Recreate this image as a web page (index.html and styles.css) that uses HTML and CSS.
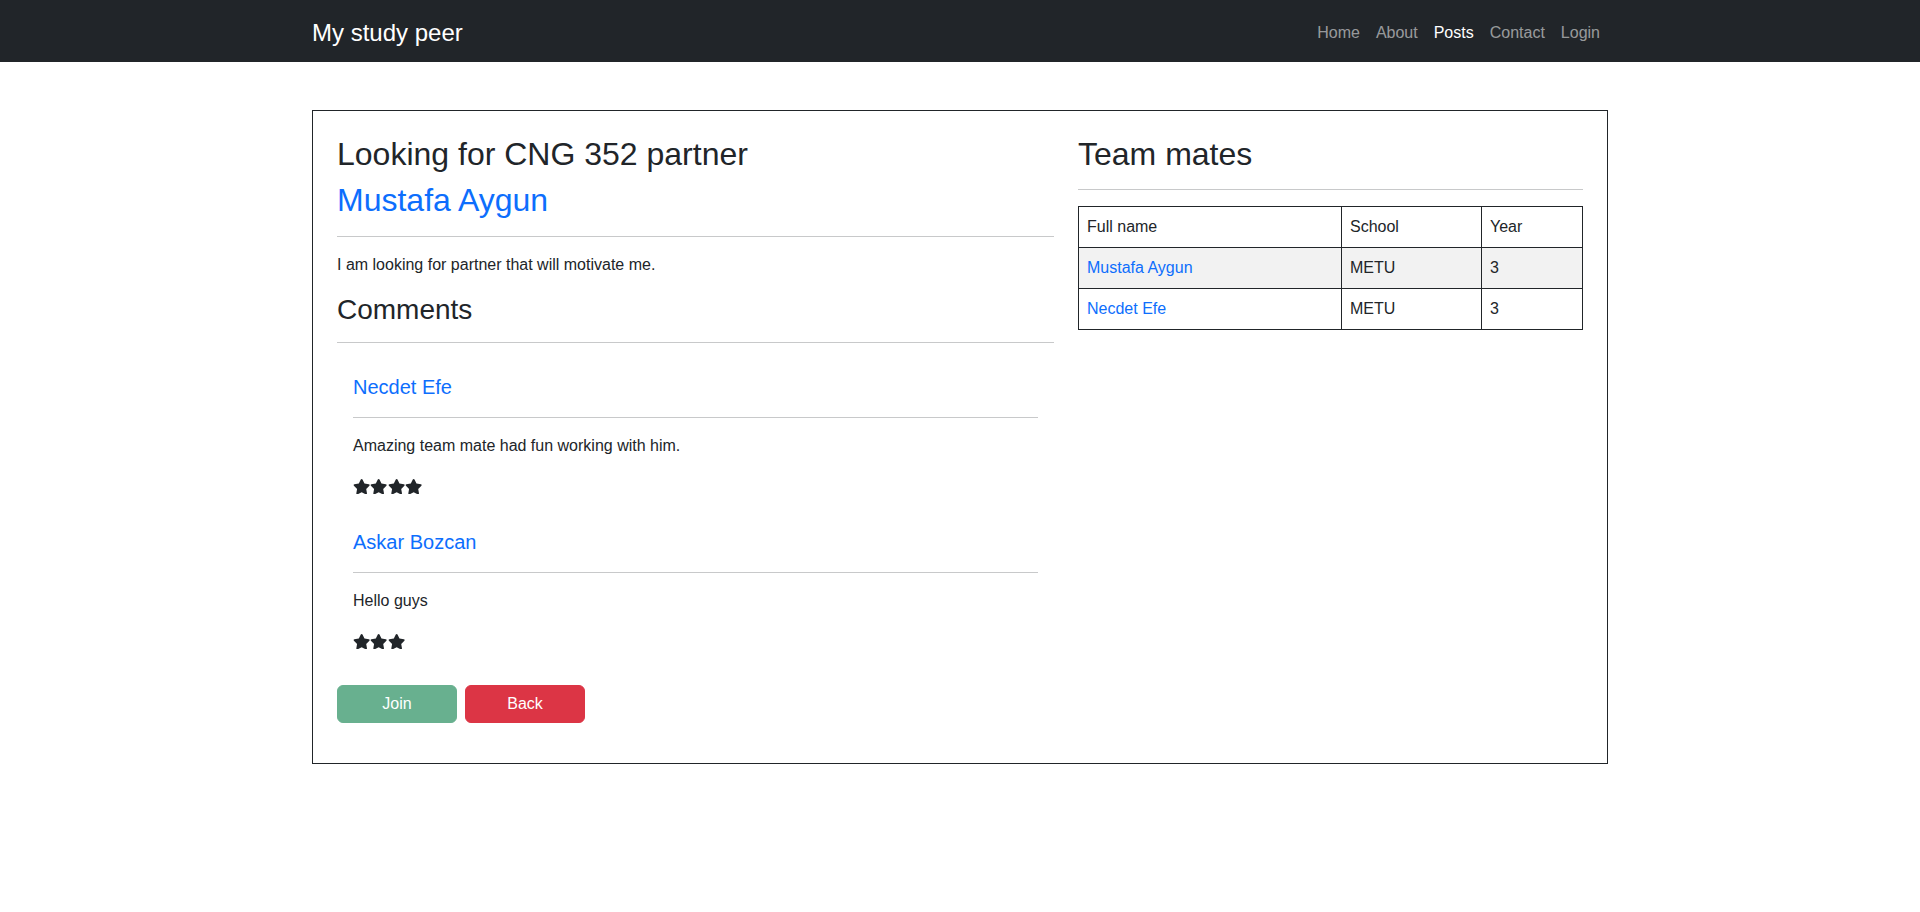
FILE: index.html
```html
<!DOCTYPE html>
<html lang="en">
<head>
<meta charset="utf-8">
<title>My study peer</title>
<link rel="stylesheet" href="styles.css">
</head>
<body>
<nav class="navbar">
  <div class="nav-inner">
    <a class="brand" href="#">My study peer</a>
    <ul class="nav-links">
      <li><a href="#">Home</a></li>
      <li><a href="#">About</a></li>
      <li><a class="active" href="#">Posts</a></li>
      <li><a href="#">Contact</a></li>
      <li><a href="#">Login</a></li>
    </ul>
  </div>
</nav>

<main class="container">
  <section class="card">
    <div class="col-main">
      <h2 class="title">Looking for CNG 352 partner</h2>
      <h2 class="author"><a href="#">Mustafa Aygun</a></h2>
      <hr class="rule">
      <p class="text">I am looking for partner that will motivate me.</p>
      <h3 class="section-title">Comments</h3>
      <hr class="rule">

      <div class="comment">
        <h5 class="comment-name"><a href="#">Necdet Efe</a></h5>
        <hr class="rule">
        <p class="text">Amazing team mate had fun working with him.</p>
        <div class="stars">
          <svg class="star" viewBox="0 0 576 512"><path d="M259.3 17.8L194 150.2 47.9 171.5c-26.2 3.8-36.7 36.1-17.7 54.6l105.7 103-25 145.5c-4.5 26.3 23.2 46 46.4 33.7L288 439.6l130.7 68.7c23.2 12.2 50.9-7.4 46.4-33.7l-25-145.5 105.7-103c19-18.5 8.5-50.8-17.7-54.6L382 150.2 316.7 17.8c-11.7-23.6-45.6-23.9-57.4 0z"/></svg>
          <svg class="star" viewBox="0 0 576 512"><path d="M259.3 17.8L194 150.2 47.9 171.5c-26.2 3.8-36.7 36.1-17.7 54.6l105.7 103-25 145.5c-4.5 26.3 23.2 46 46.4 33.7L288 439.6l130.7 68.7c23.2 12.2 50.9-7.4 46.4-33.7l-25-145.5 105.7-103c19-18.5 8.5-50.8-17.7-54.6L382 150.2 316.7 17.8c-11.7-23.6-45.6-23.9-57.4 0z"/></svg>
          <svg class="star" viewBox="0 0 576 512"><path d="M259.3 17.8L194 150.2 47.9 171.5c-26.2 3.8-36.7 36.1-17.7 54.6l105.7 103-25 145.5c-4.5 26.3 23.2 46 46.4 33.7L288 439.6l130.7 68.7c23.2 12.2 50.9-7.4 46.4-33.7l-25-145.5 105.7-103c19-18.5 8.5-50.8-17.7-54.6L382 150.2 316.7 17.8c-11.7-23.6-45.6-23.9-57.4 0z"/></svg>
          <svg class="star" viewBox="0 0 576 512"><path d="M259.3 17.8L194 150.2 47.9 171.5c-26.2 3.8-36.7 36.1-17.7 54.6l105.7 103-25 145.5c-4.5 26.3 23.2 46 46.4 33.7L288 439.6l130.7 68.7c23.2 12.2 50.9-7.4 46.4-33.7l-25-145.5 105.7-103c19-18.5 8.5-50.8-17.7-54.6L382 150.2 316.7 17.8c-11.7-23.6-45.6-23.9-57.4 0z"/></svg>
        </div>
      </div>

      <div class="comment">
        <h5 class="comment-name"><a href="#">Askar Bozcan</a></h5>
        <hr class="rule">
        <p class="text">Hello guys</p>
        <div class="stars">
          <svg class="star" viewBox="0 0 576 512"><path d="M259.3 17.8L194 150.2 47.9 171.5c-26.2 3.8-36.7 36.1-17.7 54.6l105.7 103-25 145.5c-4.5 26.3 23.2 46 46.4 33.7L288 439.6l130.7 68.7c23.2 12.2 50.9-7.4 46.4-33.7l-25-145.5 105.7-103c19-18.5 8.5-50.8-17.7-54.6L382 150.2 316.7 17.8c-11.7-23.6-45.6-23.9-57.4 0z"/></svg>
          <svg class="star" viewBox="0 0 576 512"><path d="M259.3 17.8L194 150.2 47.9 171.5c-26.2 3.8-36.7 36.1-17.7 54.6l105.7 103-25 145.5c-4.5 26.3 23.2 46 46.4 33.7L288 439.6l130.7 68.7c23.2 12.2 50.9-7.4 46.4-33.7l-25-145.5 105.7-103c19-18.5 8.5-50.8-17.7-54.6L382 150.2 316.7 17.8c-11.7-23.6-45.6-23.9-57.4 0z"/></svg>
          <svg class="star" viewBox="0 0 576 512"><path d="M259.3 17.8L194 150.2 47.9 171.5c-26.2 3.8-36.7 36.1-17.7 54.6l105.7 103-25 145.5c-4.5 26.3 23.2 46 46.4 33.7L288 439.6l130.7 68.7c23.2 12.2 50.9-7.4 46.4-33.7l-25-145.5 105.7-103c19-18.5 8.5-50.8-17.7-54.6L382 150.2 316.7 17.8c-11.7-23.6-45.6-23.9-57.4 0z"/></svg>
        </div>
      </div>

      <div class="actions">
        <button class="btn btn-join" type="button" disabled>Join</button>
        <button class="btn btn-back" type="button">Back</button>
      </div>
    </div>

    <div class="col-side">
      <h2 class="title side-title">Team mates</h2>
      <hr class="rule">
      <table class="mates">
        <colgroup>
          <col class="w-name">
          <col class="w-school">
          <col class="w-year">
        </colgroup>
        <thead>
          <tr><th>Full name</th><th>School</th><th>Year</th></tr>
        </thead>
        <tbody>
          <tr class="striped"><td><a href="#">Mustafa Aygun</a></td><td>METU</td><td>3</td></tr>
          <tr><td><a href="#">Necdet Efe</a></td><td>METU</td><td>3</td></tr>
        </tbody>
      </table>
    </div>
  </section>
</main>
</body>
</html>
```

FILE: styles.css
```css
* {
  box-sizing: border-box;
}

body {
  margin: 0;
  font-family: "Segoe UI", "Liberation Sans", Arial, sans-serif;
  font-size: 16px;
  line-height: 1.5;
  color: #212529;
  background: #fff;
}

a {
  color: #0d6efd;
  text-decoration: none;
}

/* Navbar */
.navbar {
  background: #212529;
  height: 62px;
}

.nav-inner {
  width: 1296px;
  height: 100%;
  margin: 0 auto;
  display: flex;
  align-items: center;
  justify-content: space-between;
}

.brand {
  color: #fff;
  font-size: 24px;
  line-height: 36px;
  margin-top: 3px;
}

.nav-links {
  list-style: none;
  margin: 3px 0 0;
  padding: 0;
  display: flex;
}

.nav-links a {
  display: block;
  padding: 0 8px;
  color: rgba(255, 255, 255, 0.55);
  line-height: 24px;
}

.nav-links a.active {
  color: #fff;
}

/* Content */
.container {
  width: 1296px;
  margin: 48px auto 0;
}

.card {
  border: 1px solid #212529;
  padding: 24px 24px 40px;
  display: flex;
  gap: 24px;
  align-items: flex-start;
}

.col-main {
  flex: 0 0 717px;
}

.col-side {
  flex: 1 1 auto;
  min-width: 0;
}

.title {
  font-size: 32px;
  line-height: 1.2;
  font-weight: 500;
  margin: 0 0 8px;
}

.author {
  font-size: 32px;
  line-height: 1.2;
  font-weight: 500;
  margin: 0;
}

.side-title {
  margin: 0;
}

.rule {
  border: 0;
  border-top: 1px solid #c8c9ca;
  height: 0;
  margin: 16px 0;
}

.text {
  margin: 0 0 16px;
}

.section-title {
  font-size: 28px;
  line-height: 1.2;
  font-weight: 500;
  margin: 0;
}

.comment {
  padding: 16px;
}

.comment-name {
  font-size: 20px;
  line-height: 24px;
  font-weight: 500;
  margin: 0;
}

.comment .rule {
  margin-top: 18px;
}

.stars {
  display: flex;
  align-items: center;
  height: 24px;
}

.star {
  width: 17.3px;
  height: 15.4px;
  fill: #212529;
}

.actions {
  display: flex;
  gap: 8px;
  margin-top: 16px;
}

.btn {
  width: 120px;
  height: 38px;
  border: 1px solid transparent;
  border-radius: 6px;
  font-family: inherit;
  font-size: 16px;
  line-height: 24px;
  color: #fff;
  padding: 6px 12px;
  cursor: pointer;
}

.btn-join {
  background: #198754;
  border-color: #198754;
  opacity: 0.65;
}

.btn-back {
  background: #dc3545;
  border-color: #dc3545;
}

/* Table */
.mates {
  width: 100%;
  border-collapse: collapse;
  table-layout: fixed;
}

.w-name {
  width: 263px;
}

.w-school {
  width: 140px;
}

.mates th,
.mates td {
  border: 1px solid #212529;
  padding: 8px;
  line-height: 24px;
  text-align: left;
  font-weight: 400;
}

.mates tr.striped td {
  background: #f2f2f2;
}
```
